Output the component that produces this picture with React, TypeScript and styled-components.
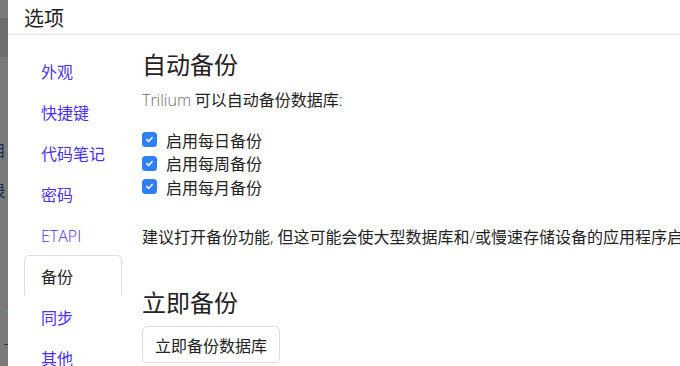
import React from 'react'
import styled, { createGlobalStyle } from 'styled-components'

const GlobalStyle = createGlobalStyle`
    html, body {
        margin: 0;
        height: 100%;
        overflow: hidden;
        background: #7a7a7a;
    }
    body {
        font-family: "Noto Sans CJK SC", "Noto Sans", sans-serif;
        color: #212529;
    }
    #root {
        height: 100%;
    }
`

const Screen = styled.div`
    display: flex;
    height: 100vh;
`

const Backdrop = styled.div`
    width: 8px;
    flex-shrink: 0;
    display: flex;
    flex-direction: column;
    overflow: hidden;
    background: #7a7a7a;
`

const Band = styled.div`
    margin-top: 18px;
    height: 39px;
    background: #6e6e6e;
`

const BehindText = styled.span<{ $top: number }>`
    display: block;
    margin-top: ${(p) => p.$top}px;
    margin-left: -10px;
    font-size: 16px;
    line-height: 18px;
    color: #1d2b57;
    white-space: nowrap;
`

const BehindMark = styled.span<{ $top: number; $color: string }>`
    display: block;
    margin-top: ${(p) => p.$top}px;
    margin-left: 4px;
    width: 4px;
    height: 1px;
    background: ${(p) => p.$color};
`

const Modal = styled.div`
    flex: 1;
    min-width: 0;
    display: flex;
    flex-direction: column;
    background: #fff;
`

const Header = styled.div`
    height: 35px;
    box-sizing: border-box;
    display: flex;
    align-items: center;
    padding: 1px 16px 0;
    border-bottom: 1px solid #e2dfe9;
`

const Title = styled.h5`
    margin: 0;
    font-size: 20px;
    font-weight: 400;
    line-height: 24px;
    color: #222;
`

const Body = styled.div`
    flex: 1;
    display: flex;
    padding-left: 16px;
    overflow: hidden;
`

const Nav = styled.ul`
    width: 98px;
    flex-shrink: 0;
    margin: 0;
    padding: 15px 0 0;
    list-style: none;
`

const NavItem = styled.li<{ $active?: boolean }>`
    height: 41px;
    box-sizing: border-box;
    padding: 8px 16px;
    border: 1px solid ${(p) => (p.$active ? '#dfdde6' : 'transparent')};
    border-bottom-color: transparent;
    border-radius: 5px 5px 0 0;
    font-size: 16px;
    line-height: 24px;
    color: ${(p) => (p.$active ? '#222' : '#4b2ff2')};
    white-space: nowrap;
`

const Latin = styled.span<{ $muted?: boolean }>`
    font-family: "Open Sans", "Noto Sans", sans-serif;
    font-weight: 300;
    ${(p) => (p.$muted ? 'color: #6b6b6b;' : '')}
`

const Content = styled.div`
    flex: 1;
    min-width: 0;
    margin-left: 20px;
    padding-top: 15px;
    white-space: nowrap;
`

const Heading = styled.h4`
    margin: 0 0 8px;
    font-size: 24px;
    font-weight: 400;
    line-height: 28.8px;
    color: #222;
`

const Text = styled.p`
    margin: 0;
    font-size: 16px;
    line-height: 24px;
    color: #222;
`

const CheckList = styled.div`
    display: flex;
    flex-direction: column;
    margin: 16px 0 0;
`

const CheckRow = styled.label`
    display: flex;
    align-items: center;
    gap: 9px;
    height: 23.5px;
    font-size: 16px;
    color: #222;
`

const Box = styled.span`
    width: 15px;
    height: 15px;
    border-radius: 3.5px;
    background: #2f7ff6;
    display: flex;
    align-items: center;
    justify-content: center;
`

const Note = styled(Text)`
    margin-top: 25.5px;
`

const NowHeading = styled(Heading)`
    margin-top: 39.5px;
`

const Button = styled.button`
    height: 37px;
    box-sizing: border-box;
    padding: 0 12px;
    margin-top: 1px;
    border: 1px solid #dcdce2;
    border-radius: 5px;
    background: #fff;
    font-family: inherit;
    font-size: 16px;
    color: #222;
    line-height: 24px;
`

const Check = () => (
    <Box>
        <svg width="9" height="9" viewBox="0 0 10 10">
            <path d="M2 5.2l2 2 4-4.4" fill="none" stroke="#fff" strokeWidth="1.8" strokeLinecap="round" strokeLinejoin="round" />
        </svg>
    </Box>
)

const navItems = ['外观', '快捷键', '代码笔记', '密码', 'ETAPI', '备份', '同步', '其他']
const checks = ['启用每日备份', '启用每周备份', '启用每月备份']

const App = () => (
    <>
        <GlobalStyle />
        <Screen>
            <Backdrop>
                <Band />
                <BehindText $top={84}>目</BehindText>
                <BehindText $top={22}>录</BehindText>
                <BehindMark $top={112} $color="#3aa6b0" />
                <BehindMark $top={32} $color="#333" />
            </Backdrop>
            <Modal>
                <Header>
                    <Title>选项</Title>
                </Header>
                <Body>
                    <Nav>
                        {navItems.map((item) => (
                            <NavItem key={item} $active={item === '备份'}>
                                {item === 'ETAPI' ? <Latin>{item}</Latin> : item}
                            </NavItem>
                        ))}
                    </Nav>
                    <Content>
                        <Heading>自动备份</Heading>
                        <Text>
                            <Latin $muted>Trilium</Latin> 可以自动备份数据库<Latin>:</Latin>
                        </Text>
                        <CheckList>
                            {checks.map((c) => (
                                <CheckRow key={c}>
                                    <Check />
                                    {c}
                                </CheckRow>
                            ))}
                        </CheckList>
                        <Note>
                            建议打开备份功能<Latin>, </Latin>但这可能会使大型数据库和<Latin>/</Latin>或慢速存储设备的应用程序启动变慢。
                        </Note>
                        <NowHeading>立即备份</NowHeading>
                        <Button>立即备份数据库</Button>
                    </Content>
                </Body>
            </Modal>
        </Screen>
    </>
)

export default App
